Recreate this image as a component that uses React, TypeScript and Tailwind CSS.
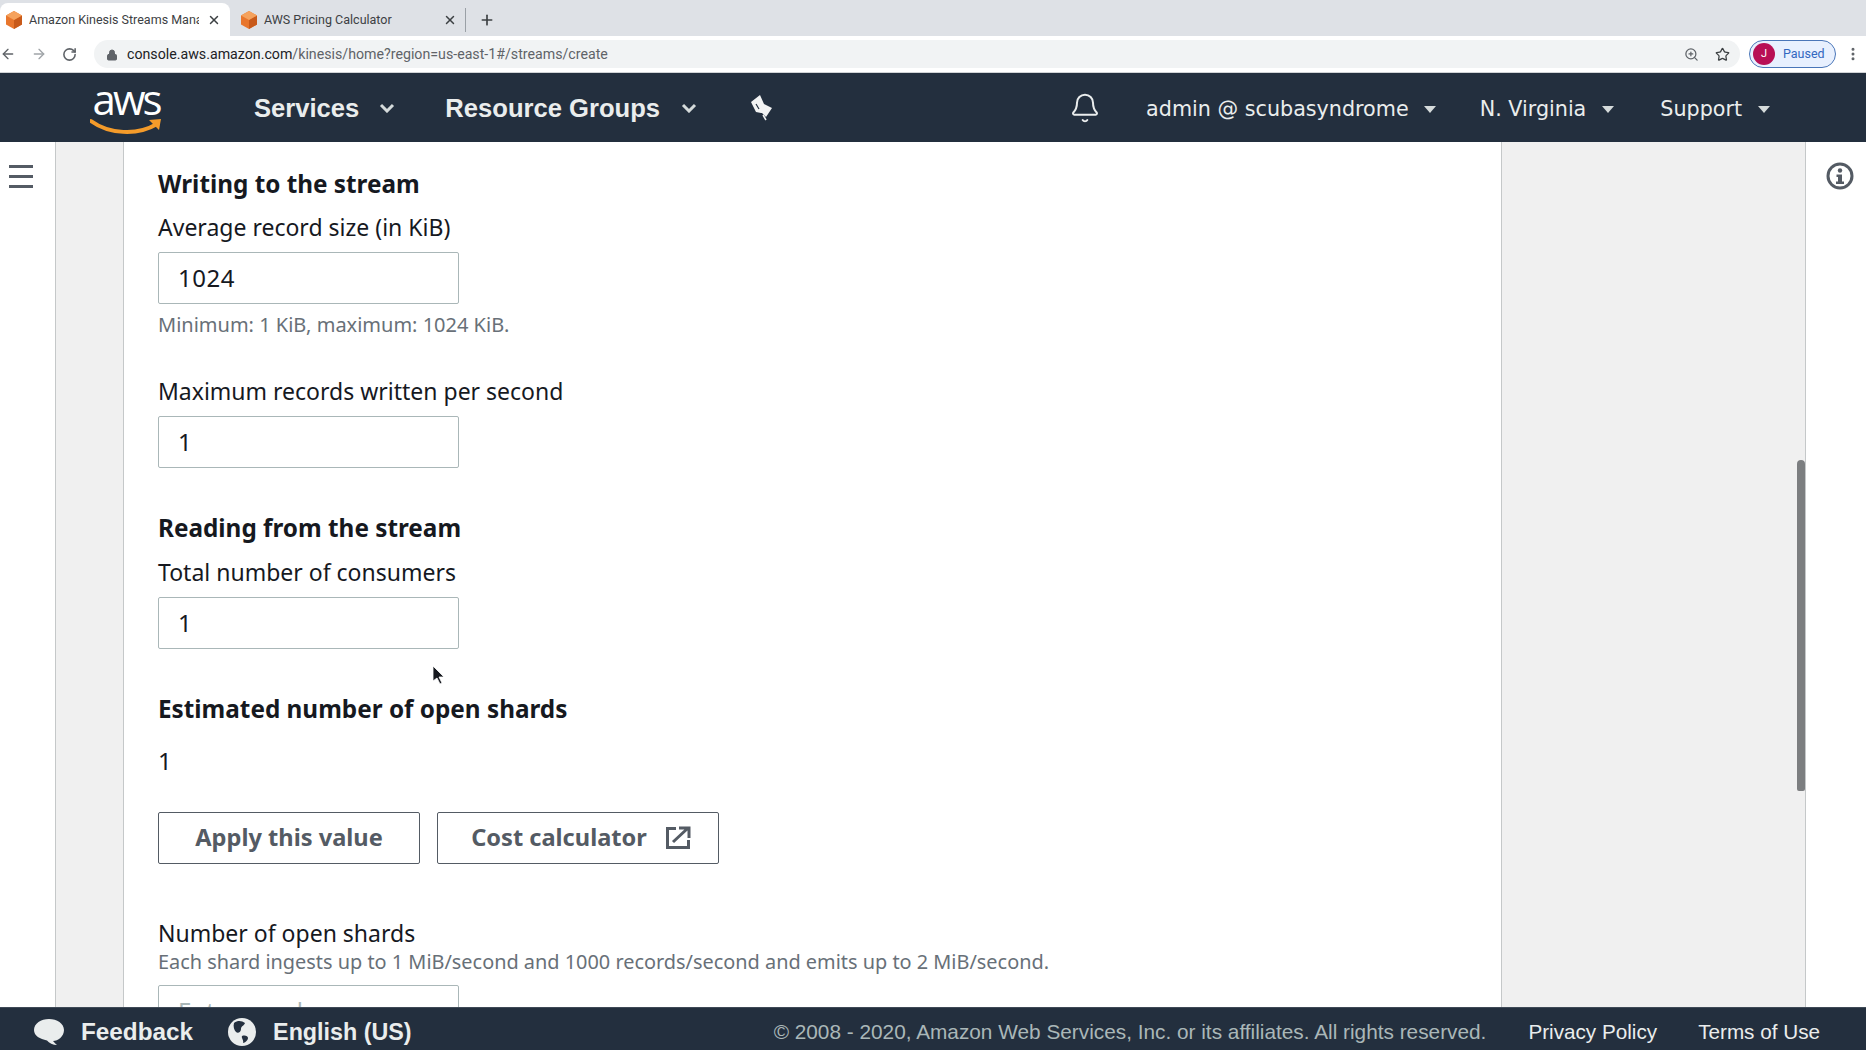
import { ArrowLeft, ArrowRight, RotateCw, Lock, X, Plus, ZoomIn, Star, Bell, EllipsisVertical } from "lucide-react";

function Cube({ className }: { className: string }) {
  return (
    <svg viewBox="0 0 16 18" className={className}>
      <path d="M8 0l8 4.5v9L8 18l-8-4.5v-9z" fill="#e8762d" />
      <path d="M8 9l8-4.5v9L8 18z" fill="#c85a1a" />
      <path d="M8 0l8 4.5L8 9 0 4.5z" fill="#f5a25d" />
    </svg>
  );
}

function Caret({ className }: { className: string }) {
  return <span className={`w-0 h-0 border-x-[6px] border-x-transparent border-t-[7px] border-t-[#d5dbdb] ${className}`} />;
}

function Chevron({ className }: { className: string }) {
  return (
    <svg viewBox="0 0 16 10" className={`w-[16px] h-[10px] ${className}`}>
      <path d="M2 2l6 6 6-6" fill="none" stroke="#d5dbdb" strokeWidth="3" />
    </svg>
  );
}

function Field({ value }: { value: string }) {
  return (
    <div className="w-[301px] h-[52px] border border-[#aab7b8] rounded-[2px] px-[19px] flex items-center text-[24px] text-[#16191f] tracking-[0.5px]">
      {value}
    </div>
  );
}

function Heading({ children, className }: { children: string; className: string }) {
  return <h2 className={`text-[24.3px] leading-[34px] font-bold text-[#16191f] ${className}`}>{children}</h2>;
}

function Label({ children, className }: { children: string; className: string }) {
  return <div className={`text-[23px] leading-[32px] text-[#16191f] ${className}`}>{children}</div>;
}

function Button({ children, className }: { children: React.ReactNode; className: string }) {
  return (
    <div className={`h-[52px] border border-[#545b64] rounded-[2px] flex items-center justify-center gap-[18px] text-[23.6px] font-bold text-[#545b64] bg-white ${className}`}>
      {children}
    </div>
  );
}

export default function App() {
  return (
    <div className="relative w-[1866px] h-[1050px] overflow-hidden flex flex-col bg-white font-['Noto_Sans','Open_Sans',sans-serif]">
      {/* browser tabs */}
      <div className="h-[36px] bg-[#dee1e6] flex items-end font-['Roboto',sans-serif] text-[12.5px] text-[#3c4043] shrink-0">
        <div className="w-[230px] h-[33px] pt-[1px] bg-white rounded-t-[8px] flex items-center pl-[6px] pr-[8px]">
          <Cube className="w-[16px] h-[18px] shrink-0" />
          <span className="ml-[7px] w-[170px] overflow-hidden whitespace-nowrap">Amazon Kinesis Streams Mana</span>
          <X className="ml-[8px] w-[14px] h-[14px] text-[#3c4043]" strokeWidth={2.5} />
        </div>
        <div className="h-[33px] pt-[1px] flex items-center pl-[11px]">
          <Cube className="w-[16px] h-[18px] shrink-0" />
          <span className="ml-[7px] w-[179px] whitespace-nowrap">AWS Pricing Calculator</span>
          <X className="w-[14px] h-[14px] text-[#3c4043]" strokeWidth={2.5} />
          <span className="ml-[8px] w-px h-[24px] bg-[#9aa0a6]" />
          <Plus className="ml-[13px] w-[16px] h-[16px] text-[#3c4043]" strokeWidth={2.5} />
        </div>
      </div>

      {/* address bar */}
      <div className="h-[37px] bg-white flex items-center shrink-0 border-b border-[#d0d3d6]">
        <ArrowLeft className="w-[16px] h-[16px] text-[#5f6368]" />
        <ArrowRight className="ml-[15px] w-[16px] h-[16px] text-[#a0a4a8]" />
        <RotateCw className="ml-[15px] w-[15px] h-[15px] text-[#5f6368]" strokeWidth={2.5} />
        <div className="ml-[17px] w-[1646px] h-[28px] pt-[1px] rounded-full bg-[#f1f3f4] flex items-center pl-[12px] pr-[10px] font-['Roboto',sans-serif] text-[14.2px]">
          <Lock className="w-[12px] h-[12px] text-[#5f6368]" fill="#5f6368" />
          <span className="ml-[9px] text-[#202124]">console.aws.amazon.com</span>
          <span className="text-[#5f6368]">/kinesis/home?region=us-east-1#/streams/create</span>
          <ZoomIn className="ml-auto w-[15px] h-[15px] text-[#5f6368]" />
          <Star className="ml-[16px] w-[15px] h-[15px] text-[#3c4043]" />
        </div>
        <div className="ml-[9px] w-[87px] h-[28px] rounded-full border border-[#4a76b8] bg-[#e8f0fe] flex items-center font-['Roboto',sans-serif] text-[12.5px] text-[#3367c0]">
          <span className="ml-[3px] w-[22px] h-[22px] rounded-full bg-[#b80f55] text-white text-[11px] flex items-center justify-center">J</span>
          <span className="ml-[8px]">Paused</span>
        </div>
        <EllipsisVertical className="ml-[9px] w-[16px] h-[16px] text-[#5f6368]" strokeWidth={2.5} />
      </div>

      {/* console nav */}
      <div className="h-[69px] bg-[#232f3e] flex items-center shrink-0 text-white">
        <div className="ml-[89px] w-[74px] h-[56px] flex flex-col items-center">
          <span className="text-[42px] leading-[38px] font-['Open_Sans',sans-serif] font-normal tracking-[-3px]">aws</span>
          <svg viewBox="0 0 72 18" className="w-[72px] h-[18px]">
            <path d="M1 3c18 13 46 15 66 3" fill="none" stroke="#f49b2a" strokeWidth="4" strokeLinecap="round" />
            <path d="M59 2l12-1-2 11z" fill="#f49b2a" />
          </svg>
        </div>
        <span className="ml-[91px] pt-[1px] text-[25.6px] font-bold font-['Liberation_Sans',sans-serif] text-[#eaeded]">Services</span>
        <Chevron className="ml-[20px]" />
        <span className="ml-[50px] pt-[1px] text-[25.6px] font-bold font-['Liberation_Sans',sans-serif] text-[#eaeded]">Resource Groups</span>
        <Chevron className="ml-[21px]" />
        <svg viewBox="20 8 25 28" className="ml-[52px] w-[25px] h-[28px]">
          <path d="M22 16L31 9l4 9 8 4-6 9-4-4-1 0-5-1z" fill="#f2f3f3" />
          <path d="M27 18l3 5" stroke="#232f3e" strokeWidth="1.2" />
          <path d="M34 29l3 5" stroke="#f2f3f3" strokeWidth="1.5" />
        </svg>
        <Bell className="ml-[295px] w-[32px] h-[32px] text-[#eaeded]" strokeWidth={1.5} />
        <div className="ml-[45px] pt-[5px] flex items-center font-['DejaVu_Sans',sans-serif] text-[20.7px] text-[#eaeded]">
          <span>admin @ scubasyndrome</span>
          <Caret className="ml-[15px]" />
          <span className="ml-[44px]">N. Virginia</span>
          <Caret className="ml-[16px]" />
          <span className="ml-[46px]">Support</span>
          <Caret className="ml-[16px]" />
        </div>
      </div>

      {/* page body */}
      <div className="flex-1 min-h-0 flex overflow-hidden">
        <div className="w-[56px] border-r border-[#c5c8c9] flex flex-col gap-[7px] pl-[9px] pt-[23px] shrink-0">
          <span className="w-[24px] h-[3px] bg-[#545b64]" />
          <span className="w-[24px] h-[3px] bg-[#545b64]" />
          <span className="w-[24px] h-[3px] bg-[#545b64]" />
        </div>
        <div className="w-[68px] bg-[#f0f0f0] border-r border-[#c5c8c9] shrink-0" />
        <div className="w-[1377px] pl-[34px] pt-[25px] shrink-0 overflow-hidden">
          <Heading className="">Writing to the stream</Heading>
          <Label className="mt-[10px] mb-[9px]">Average record size (in KiB)</Label>
          <Field value="1024" />
          <div className="mt-[7px] text-[20px] leading-[28px] text-[#687078]">Minimum: 1 KiB, maximum: 1024 KiB.</div>
          <Label className="mt-[36px] mb-[9px]">Maximum records written per second</Label>
          <Field value="1" />
          <Heading className="mt-[43px]">Reading from the stream</Heading>
          <Label className="mt-[11px] mb-[9px]">Total number of consumers</Label>
          <Field value="1" />
          <Heading className="mt-[43px]">Estimated number of open shards</Heading>
          <div className="mt-[19px] text-[24px] leading-[32px] text-[#16191f]">1</div>
          <div className="mt-[35px] flex gap-[17px]">
            <div className="w-[262px]"><Button className="">Apply this value</Button></div>
            <div className="w-[282px]">
              <Button className="pl-[6px]">
                <span>Cost calculator</span>
                <svg viewBox="0 0 26 24" className="w-[26px] h-[24px]">
                  <path d="M11 2.500H2.500v19h21V14" fill="none" stroke="#545b64" strokeWidth="3" />
                  <path d="M8 16L22 3M14 2h10v10" fill="none" stroke="#545b64" strokeWidth="3" />
                </svg>
              </Button>
            </div>
          </div>
          <Label className="mt-[53px]">Number of open shards</Label>
          <div className="text-[19.9px] leading-[26px] text-[#687078] whitespace-nowrap">Each shard ingests up to 1 MiB/second and 1000 records/second and emits up to 2 MiB/second.</div>
          <div className="mt-[10px] w-[301px] h-[52px] border border-[#aab7b8] rounded-[2px] px-[19px] flex items-center text-[24px] text-[#aab7b8]">Enter number</div>
        </div>
        <div className="w-[305px] bg-[#f0f0f0] border-l border-r border-[#c5c8c9] shrink-0 flex justify-end pt-[318px]">
          <div className="w-[8px] h-[331px] rounded-t-[4px] rounded-b-[2px] bg-[#7c7e80]" />
        </div>
        <div className="flex-1 pl-[20px] pt-[20px]">
          <svg viewBox="0 0 28 28" className="w-[28px] h-[28px]">
            <circle cx="14" cy="14" r="12" fill="none" stroke="#545b64" strokeWidth="3" />
            <circle cx="14" cy="8.500" r="2.200" fill="#545b64" />
            <path d="M10.500 12.500h5.500v7h2V22h-8v-2.500h2v-4.500h-1.500z" fill="#545b64" />
          </svg>
        </div>
      </div>

      {/* console footer */}
      <div className="h-[43px] bg-[#232f3e] flex items-center shrink-0 pt-[6px] font-['Liberation_Sans',sans-serif] text-[#eaeded] border-t border-[#3f4a57]">
        <svg viewBox="0 0 32 30" className="ml-[33px] w-[32px] h-[30px]">
          <path d="M16 2c8 0 15 4.500 15 11s-6 11-11 11c1 1.500 3 3 4 4-4 0-8-2-10-4.500C7 22 1 19 1 13 1 6.500 8 2 16 2z" fill="#eaeded" />
        </svg>
        <span className="ml-[16px] text-[24.3px] font-bold">Feedback</span>
        <svg viewBox="0 0 28 28" className="ml-[35px] w-[28px] h-[28px]">
          <circle cx="14" cy="14" r="14" fill="#eaeded" />
          <path d="M6 5c4-3 8-2 11 0-1 3-4 3-4 6s-3 5-5 3-3-6-2-9zM14 18c3-1 6 0 6 2s-3 5-5 5c1-3-2-5-1-7z" fill="#232f3e" />
        </svg>
        <span className="ml-[17px] text-[23.3px] font-bold">English (US)</span>
        <span className="ml-auto text-[20.8px] text-[#aab7b8]">© 2008 - 2020, Amazon Web Services, Inc. or its affiliates. All rights reserved.</span>
        <span className="ml-[42px] text-[20.7px]">Privacy Policy</span>
        <span className="ml-[41px] mr-[46px] text-[20.7px]">Terms of Use</span>
      </div>

      {/* mouse pointer */}
      <svg viewBox="0 0 12 20" className="absolute left-[432px] top-[665px] w-[12px] h-[20px]">
        <path d="M1 1v15l4-3 3 6 2-1-3-6h5z" fill="#16191f" stroke="#ffffff" strokeWidth="0.8" />
      </svg>
    </div>
  );
}
